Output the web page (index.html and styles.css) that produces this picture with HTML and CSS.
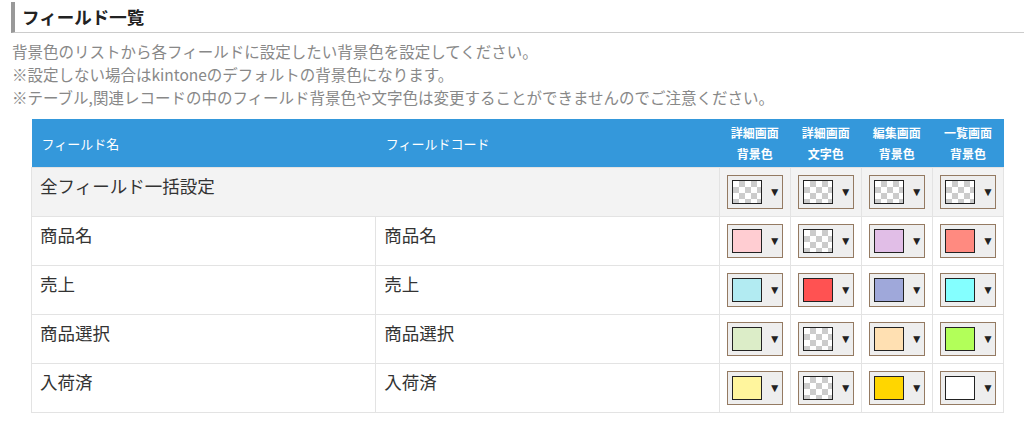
FILE: index.html
```html
<!DOCTYPE html>
<html lang="ja">
  <head>
    <meta charset="UTF-8" />
    <title>フィールド一覧</title>
    <link rel="stylesheet" href="styles.css">
  </head>
  <body>
    <h2 class="section-title">フィールド一覧</h2>
    <div class="notes">
      <p>背景色のリストから各フィールドに設定したい背景色を設定してください。</p>
      <p>※設定しない場合はkintoneのデフォルトの背景色になります。</p>
      <p>※テーブル,関連レコードの中のフィールド背景色や文字色は変更することができませんのでご注意ください。</p>
    </div>

    <table class="field-table">
      <colgroup>
        <col class="col-name" />
        <col class="col-code" />
        <col class="col-color" />
        <col class="col-color" />
        <col class="col-color" />
        <col class="col-color" />
      </colgroup>
      <thead>
        <tr>
          <th>フィールド名</th>
          <th>フィールドコード</th>
          <th class="color-head">詳細画面<br />背景色</th>
          <th class="color-head">詳細画面<br />文字色</th>
          <th class="color-head">編集画面<br />背景色</th>
          <th class="color-head">一覧画面<br />背景色</th>
        </tr>
      </thead>
      <tbody>
        <tr class="all-row">
          <td colspan="2">全フィールド一括設定</td>
          <td class="picker-cell"><button class="picker"><span class="swatch none"></span><span class="caret">▼</span></button></td>
          <td class="picker-cell"><button class="picker"><span class="swatch none"></span><span class="caret">▼</span></button></td>
          <td class="picker-cell"><button class="picker"><span class="swatch none"></span><span class="caret">▼</span></button></td>
          <td class="picker-cell"><button class="picker"><span class="swatch none"></span><span class="caret">▼</span></button></td>
        </tr>
        <tr>
          <td>商品名</td>
          <td>商品名</td>
          <td class="picker-cell"><button class="picker"><span class="swatch" style="background-color: #ffcdd2"></span><span class="caret">▼</span></button></td>
          <td class="picker-cell"><button class="picker"><span class="swatch none"></span><span class="caret">▼</span></button></td>
          <td class="picker-cell"><button class="picker"><span class="swatch" style="background-color: #e1bee7"></span><span class="caret">▼</span></button></td>
          <td class="picker-cell"><button class="picker"><span class="swatch" style="background-color: #ff8a80"></span><span class="caret">▼</span></button></td>
        </tr>
        <tr>
          <td>売上</td>
          <td>売上</td>
          <td class="picker-cell"><button class="picker"><span class="swatch" style="background-color: #b2ebf2"></span><span class="caret">▼</span></button></td>
          <td class="picker-cell"><button class="picker"><span class="swatch" style="background-color: #ff5252"></span><span class="caret">▼</span></button></td>
          <td class="picker-cell"><button class="picker"><span class="swatch" style="background-color: #9fa8da"></span><span class="caret">▼</span></button></td>
          <td class="picker-cell"><button class="picker"><span class="swatch" style="background-color: #84ffff"></span><span class="caret">▼</span></button></td>
        </tr>
        <tr>
          <td>商品選択</td>
          <td>商品選択</td>
          <td class="picker-cell"><button class="picker"><span class="swatch" style="background-color: #dcedc8"></span><span class="caret">▼</span></button></td>
          <td class="picker-cell"><button class="picker"><span class="swatch none"></span><span class="caret">▼</span></button></td>
          <td class="picker-cell"><button class="picker"><span class="swatch" style="background-color: #ffe0b2"></span><span class="caret">▼</span></button></td>
          <td class="picker-cell"><button class="picker"><span class="swatch" style="background-color: #b2ff59"></span><span class="caret">▼</span></button></td>
        </tr>
        <tr>
          <td>入荷済</td>
          <td>入荷済</td>
          <td class="picker-cell"><button class="picker"><span class="swatch" style="background-color: #fff59d"></span><span class="caret">▼</span></button></td>
          <td class="picker-cell"><button class="picker"><span class="swatch none"></span><span class="caret">▼</span></button></td>
          <td class="picker-cell"><button class="picker"><span class="swatch" style="background-color: #ffd600"></span><span class="caret">▼</span></button></td>
          <td class="picker-cell"><button class="picker"><span class="swatch" style="background-color: #ffffff"></span><span class="caret">▼</span></button></td>
        </tr>
      </tbody>
    </table>
  </body>
</html>
```

FILE: styles.css
```css
body {
  font-family: "Noto Sans CJK JP", "Noto Sans", sans-serif;
  margin: 0;
  padding: 2px 0 0 11px;
  background-color: #fff;
  color: #333;
}

.section-title {
  margin: 0;
  padding: 0 0 0 7px;
  height: 30px;
  line-height: 30px;
  font-size: 17.5px;
  font-weight: bold;
  color: #222;
  border-left: 4px solid #999;
  border-bottom: 1px solid #ccc;
}

.notes {
  padding: 7px 0 0 1px;
  font-size: 15.5px;
  color: #888;
  line-height: 23px;
}

.notes p {
  margin: 0;
}

.field-table {
  margin: 10px 0 0 20px;
  width: 973px;
  border-collapse: collapse;
  table-layout: fixed;
}

.col-name {
  width: 344px;
}

.col-code {
  width: 343px;
}

.col-color {
  width: 71px;
}

.field-table th {
  background-color: #3498db;
  color: #fff;
  font-size: 13px;
  font-weight: normal;
  text-align: left;
  height: 48px;
  padding: 0 0 0 10px;
}

.field-table th.color-head {
  text-align: center;
  padding: 0;
  font-size: 12px;
  font-weight: bold;
  line-height: 21px;
}

.field-table td {
  border: 1px solid #e3e3e3;
  height: 42px;
  padding: 6px 8px 0;
  vertical-align: top;
  font-size: 17.5px;
  line-height: 24px;
}

.all-row td {
  background-color: #f3f3f3;
}

.field-table td.picker-cell {
  padding: 0;
  text-align: center;
  vertical-align: middle;
}

.picker {
  display: inline-flex;
  align-items: center;
  width: 56px;
  height: 34px;
  padding: 0 0 0 4px;
  border: 1px solid #947a62;
  background-color: #eee;
  cursor: pointer;
  vertical-align: middle;
}

.swatch {
  display: block;
  width: 28px;
  height: 22px;
  border: 1px solid #222;
  background-color: #fff;
}

.swatch.none {
  background-color: #fff;
  background-image:
    linear-gradient(45deg, #ccc 25%, transparent 25%, transparent 75%, #ccc 75%),
    linear-gradient(45deg, #ccc 25%, transparent 25%, transparent 75%, #ccc 75%);
  background-size: 12px 12px;
  background-position: 0 0, 6px 6px;
}

.caret {
  margin-left: 7px;
  font-size: 12px;
  color: #222;
  line-height: 1;
}
```
